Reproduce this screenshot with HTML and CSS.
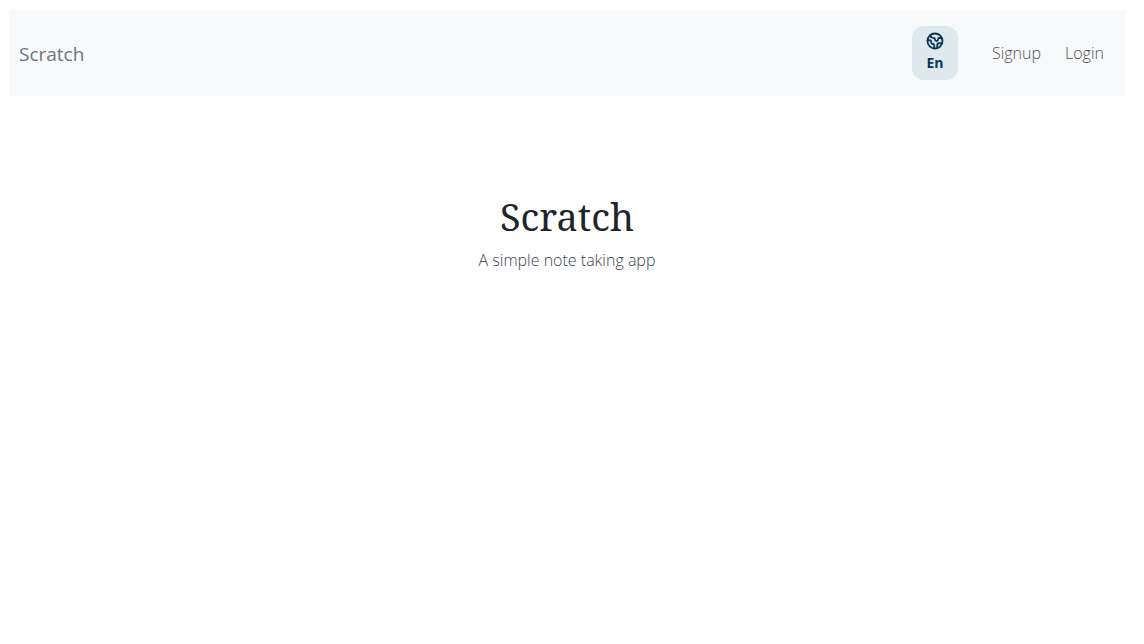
FILE: index.html
```html
<!DOCTYPE html>
<html lang="en">
<head>
<meta charset="utf-8">
<meta name="viewport" content="width=device-width, initial-scale=1">
<title>Scratch</title>
<link rel="stylesheet" href="styles.css">
</head>
<body>
<header class="navbar">
  <a class="brand" href="#">Scratch</a>
  <nav class="menu">
    <button class="language" type="button">
      <svg class="globe" viewBox="0 0 24 24" fill="none" stroke="currentColor" stroke-width="2.4" stroke-linecap="round" stroke-linejoin="round" aria-hidden="true">
        <circle cx="12" cy="12" r="10"/>
        <path d="M21.54 15H17a2 2 0 0 0-2 2v4.54M5.5 4.5l1.5 2.5 3 1a2 2 0 0 1 2 2c0 1.1.9 2 2 2a2 2 0 0 0 2-2c0-1.1.9-2 2-2h2.6M11 21.95V18a2 2 0 0 0-2-2a2 2 0 0 1-2-2v-1a2 2 0 0 0-2-2H2.05"/>
      </svg>
      <span>En</span>
    </button>
    <a class="link" href="#">Signup</a>
    <a class="link" href="#">Login</a>
  </nav>
</header>
<main class="lander">
  <h1 class="title">Scratch</h1>
  <p class="tagline">A simple note taking app</p>
</main>
</body>
</html>
```
FILE: styles.css
```css
* { box-sizing: border-box; }
body {
  margin: 0;
  padding: 10px 19px 0 9px;
  background: #fff;
  color: #212529;
  font: 300 16px/24px "Open Sans", "Noto Sans", sans-serif;
}
.navbar {
  display: flex;
  align-items: center;
  justify-content: space-between;
  padding: 16px 9px 16px 10px;
  background: #f8f9fa;
}
.brand { padding-top: 2px; color: #6c757d; font-size: 19px; font-weight: 400; text-decoration: none; }
.menu { display: flex; align-items: center; }
.language {
  display: flex;
  flex-direction: column;
  align-items: center;
  width: 46px;
  height: 54px;
  margin-right: 22px;
  padding: 6px 0;
  border: 0;
  border-radius: 12px;
  background: #dde9ed;
  color: #0d3354;
  font: bold 14px/26px "Open Sans", "Noto Sans", sans-serif;
}
.globe { width: 18px; height: 18px; flex: none; }
.link { padding: 0 12px; color: #505153; text-decoration: none; }
.lander { padding-top: 95px; text-align: center; }
.title { margin: 0; font: 400 38px/50px "Noto Serif", "Liberation Serif", serif; }
.tagline { margin: 7px 0 0; color: #3c454e; }
```
